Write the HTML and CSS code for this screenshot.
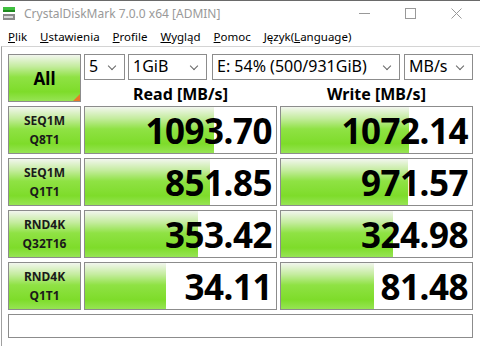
FILE: index.html
```html
<!DOCTYPE html>
<html>
<head>
    <title>CrystalDiskMark 7.0.0 x64 [ADMIN]</title>
    <link rel="stylesheet" href="styles.css">
</head>
<body>
    <div class="window">
        <!-- Title bar -->
        <div class="titlebar">
            <svg class="app-icon" width="12" height="14" viewBox="0 0 12 14">
                <rect x="0" y="0" width="12" height="3" fill="#3fbf3f"/>
                <rect x="0" y="3" width="12" height="2" fill="#1e8a1e"/>
                <rect x="0" y="7" width="12" height="6" fill="#8a8a8a"/>
                <rect x="1" y="9" width="9" height="2" fill="#d8d8d8"/>
            </svg>
            <span class="title">CrystalDiskMark 7.0.0 x64 [ADMIN]</span>
            <div class="controls">
                <svg width="11" height="11" viewBox="0 0 11 11"><line x1="0" y1="5.5" x2="11" y2="5.5" stroke="#999" stroke-width="1"/></svg>
                <svg width="11" height="11" viewBox="0 0 11 11"><rect x="0.5" y="0.5" width="10" height="10" fill="none" stroke="#999" stroke-width="1"/></svg>
                <svg width="11" height="11" viewBox="0 0 11 11"><path d="M0.5 0.5 L10.5 10.5 M10.5 0.5 L0.5 10.5" stroke="#999" stroke-width="1"/></svg>
            </div>
        </div>

        <!-- Menu bar -->
        <div class="menubar">
            <span><u>P</u>lik</span>
            <span><u>U</u>stawienia</span>
            <span><u>P</u>rofile</span>
            <span><u>W</u>ygląd</span>
            <span><u>P</u>omoc</span>
            <span>Język(<u>L</u>anguage)</span>
        </div>

        <!-- Main area -->
        <div class="main">
            <div class="grid">
                <div class="btn all">All<span class="corner"></span></div>
                <div class="top">
                    <div class="selects">
                        <div class="select s-count">5</div>
                        <div class="select s-size">1GiB</div>
                        <div class="select s-drive">E: 54% (500/931GiB)</div>
                        <div class="select s-unit">MB/s</div>
                    </div>
                    <div class="heads">
                        <div>Read [MB/s]</div>
                        <div>Write [MB/s]</div>
                    </div>
                </div>

                <div class="btn label">SEQ1M<br>Q8T1</div>
                <div class="value"><div class="bar" style="width: 129px"></div><span>1093.70</span></div>
                <div class="value"><div class="bar" style="width: 128px"></div><span>1072.14</span></div>

                <div class="btn label">SEQ1M<br>Q1T1</div>
                <div class="value"><div class="bar" style="width: 125px"></div><span>851.85</span></div>
                <div class="value"><div class="bar" style="width: 127px"></div><span>971.57</span></div>

                <div class="btn label">RND4K<br>Q32T16</div>
                <div class="value"><div class="bar" style="width: 113px"></div><span>353.42</span></div>
                <div class="value"><div class="bar" style="width: 112px"></div><span>324.98</span></div>

                <div class="btn label">RND4K<br>Q1T1</div>
                <div class="value"><div class="bar" style="width: 81px"></div><span>34.11</span></div>
                <div class="value"><div class="bar" style="width: 93px"></div><span>81.48</span></div>

                <div class="comment"></div>
            </div>
        </div>
    </div>
</body>
</html>
```

FILE: styles.css
```css
body {
    margin: 0;
    background: #ffffff;
    font-family: "Noto Sans", "DejaVu Sans", sans-serif;
    color: #000;
}

.window {
    width: 480px;
    height: 346px;
    overflow: hidden;
    border-top: 1px solid #6a6a6a;
    box-sizing: border-box;
}

/* Title bar */
.titlebar {
    display: flex;
    align-items: center;
    height: 25px;
    padding-left: 3px;
}

.app-icon {
    margin-top: 1px;
}

.title {
    margin-left: 9px;
    font-size: 12px;
    color: #999;
}

.controls {
    margin-left: auto;
    display: flex;
    gap: 35px;
    margin-right: 18px;
}

/* Menu bar */
.menubar {
    display: flex;
    height: 20px;
    align-items: center;
    padding-left: 8px;
    gap: 13px;
    font-size: 11.5px;
}

/* Main area */
.main {
    border-top: 1px solid #d4d4d4;
    border-left: 1px solid #a0a0a0;
    margin-left: 1px;
    padding: 7px 0 0 6px;
    height: 300px;
}

.grid {
    display: grid;
    grid-template-columns: 73px 193px 193px;
    grid-template-rows: 48px 48px 48px 48px 48px 24px;
    column-gap: 3px;
    row-gap: 4px;
}

.btn {
    position: relative;
    box-sizing: border-box;
    border: 1px solid #8c8c8c;
    background: linear-gradient(to bottom, #f2f6ee 0%, #c4ec9e 25%, #8fe244 48%, #7edc2a 80%, #96e454 100%);
    display: flex;
    align-items: center;
    justify-content: center;
    text-align: center;
    font-weight: bold;
}

.all {
    font-size: 17px;
}

.corner {
    position: absolute;
    right: 0;
    bottom: 0;
    width: 0;
    height: 0;
    border-left: 7px solid transparent;
    border-bottom: 7px solid #e8782a;
}

.label {
    font-size: 12px;
    line-height: 19px;
    color: #1a1a1a;
}

.top {
    grid-column: 2 / 4;
    display: flex;
    flex-direction: column;
}

.selects {
    display: flex;
    height: 26px;
}

.select {
    box-sizing: border-box;
    height: 26px;
    border: 1px solid #8c8c8c;
    background: #fff;
    font-size: 16px;
    line-height: 23px;
    padding-left: 4px;
    position: relative;
}

.select::after {
    content: "";
    position: absolute;
    right: 9px;
    top: 8px;
    width: 5px;
    height: 5px;
    border-right: 1px solid #666;
    border-bottom: 1px solid #666;
    transform: rotate(45deg);
}

.s-count { width: 41px; }
.s-size { width: 79px; margin-left: 3px; }
.s-drive { width: 188px; margin-left: 5px; }
.s-unit { width: 69px; margin-left: 4px; }

.heads {
    display: grid;
    grid-template-columns: 193px 193px;
    column-gap: 3px;
    flex: 1;
    align-items: center;
    text-align: center;
    font-weight: bold;
    font-size: 16px;
    padding-top: 3px;
}

.value {
    position: relative;
    box-sizing: border-box;
    border: 1px solid #8c8c8c;
    background: #fff;
    display: flex;
    align-items: center;
    justify-content: flex-end;
    padding-right: 4px;
    font-weight: bold;
    font-size: 35px;
    letter-spacing: -0.5px;
}

.bar {
    position: absolute;
    left: 0;
    top: 0;
    bottom: 0;
    background: linear-gradient(to bottom, #f2f6ee 0%, #c4ec9e 25%, #8fe244 48%, #7edc2a 80%, #96e454 100%);
}

.value span {
    position: relative;
}

.comment {
    grid-column: 1 / 4;
    box-sizing: border-box;
    border: 1px solid #8c8c8c;
    background: #fff;
}
```
